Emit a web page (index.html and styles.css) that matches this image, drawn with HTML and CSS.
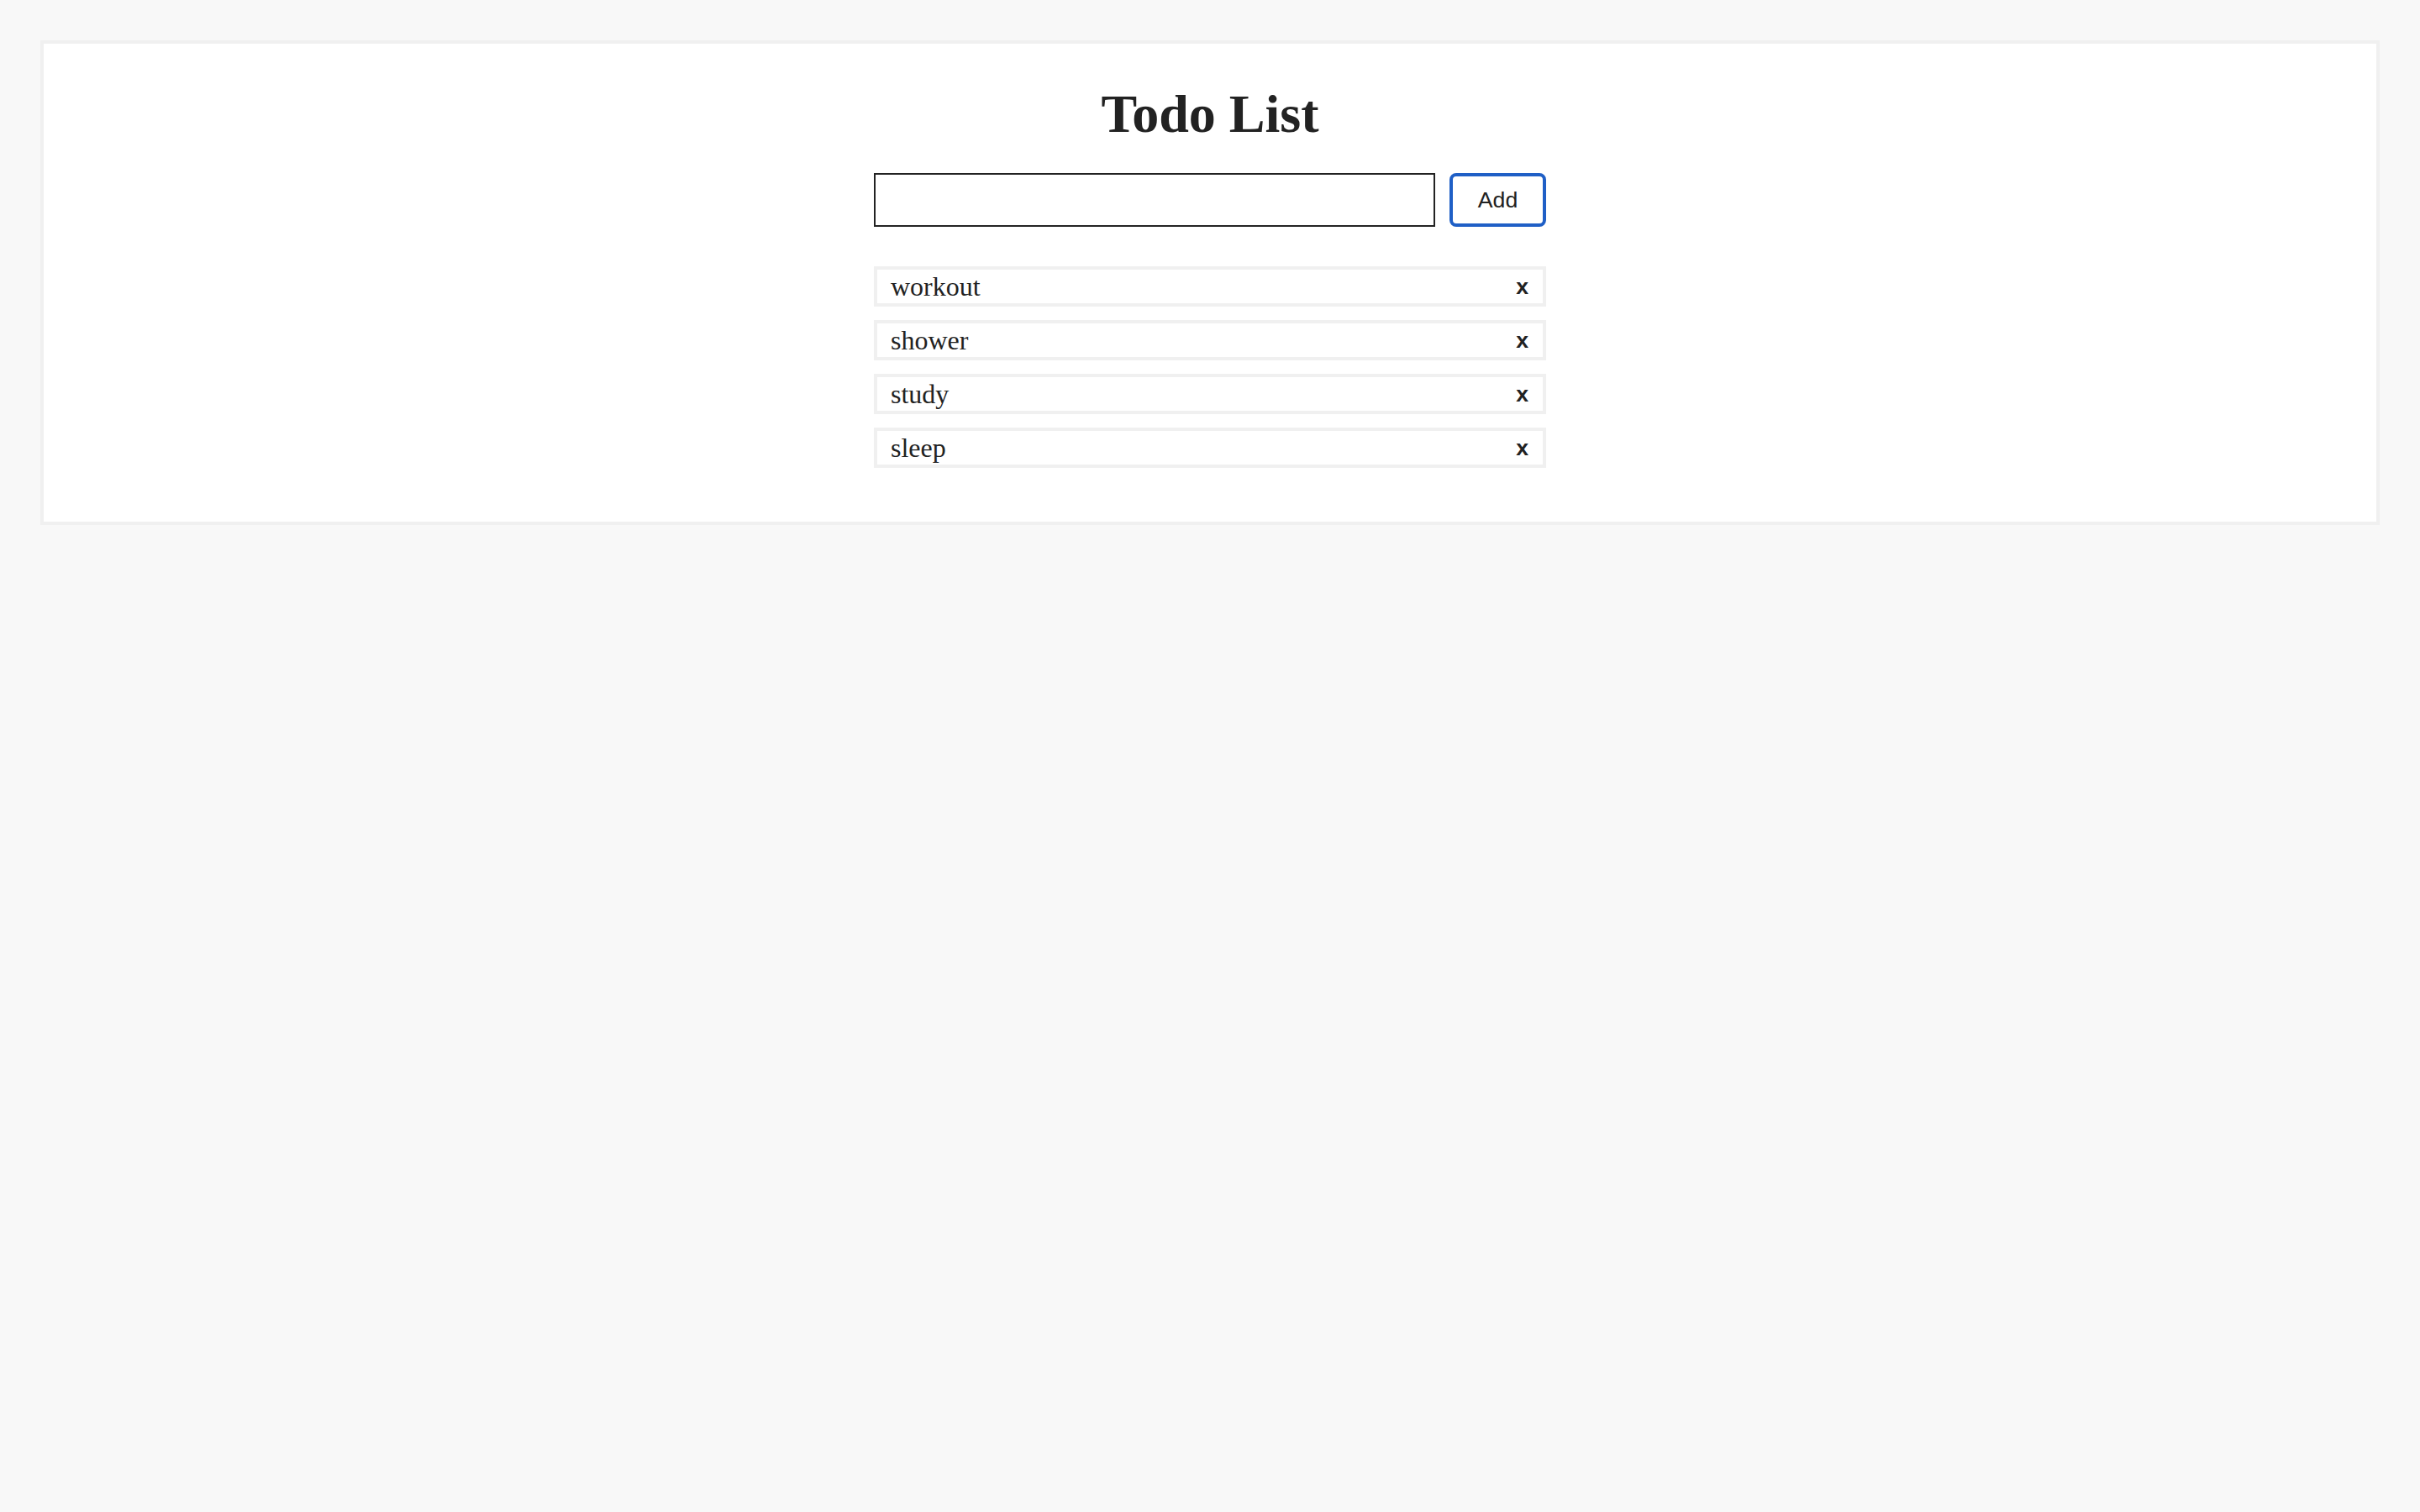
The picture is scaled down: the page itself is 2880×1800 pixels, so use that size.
FILE: index.html
```html
<!DOCTYPE html>
<html lang="en">
<head>
<meta charset="utf-8">
<title>Todo List</title>
<link rel="stylesheet" href="styles.css">
</head>
<body>
<main class="card">
  <h1 class="title">Todo List</h1>
  <form class="add-row" onsubmit="return false">
    <input class="add-input" type="text" aria-label="New todo">
    <button class="add-btn" type="button">Add</button>
  </form>
  <ul class="todo-list">
    <li class="todo-item"><span class="todo-text">workout</span><button class="remove-btn" type="button">x</button></li>
    <li class="todo-item"><span class="todo-text">shower</span><button class="remove-btn" type="button">x</button></li>
    <li class="todo-item"><span class="todo-text">study</span><button class="remove-btn" type="button">x</button></li>
    <li class="todo-item"><span class="todo-text">sleep</span><button class="remove-btn" type="button">x</button></li>
  </ul>
</main>
</body>
</html>
```

FILE: styles.css
```css
html, body {
  margin: 0;
  padding: 0;
}
body {
  background: #f8f8f8;
  padding: 48px 48px 0 48px;
  font-family: "Liberation Serif", "Times New Roman", serif;
  color: #222;
}
.card {
  background: #ffffff;
  border: 4px solid #f0f0f0;
  padding: 48px 0 64px 0;
  display: flex;
  flex-direction: column;
  align-items: center;
}
.title {
  margin: 0;
  font-family: "Liberation Serif", "Times New Roman", serif;
  font-size: 64px;
  line-height: 72px;
  font-weight: bold;
  color: #222;
}
.add-row {
  margin: 34px 0 0 0;
  width: 800px;
  display: flex;
  gap: 17px;
}
.add-input {
  width: 668px;
  height: 64px;
  box-sizing: border-box;
  border: 2px solid #222;
  border-radius: 0;
  padding: 0 8px;
  font-family: "Liberation Sans", Arial, sans-serif;
  font-size: 26px;
  outline: none;
  background: #fff;
}
.add-btn {
  width: 115px;
  height: 64px;
  box-sizing: border-box;
  border: 4px solid #1f5fc6;
  border-radius: 8px;
  background: #fff;
  color: #222;
  font-family: "Liberation Sans", Arial, sans-serif;
  font-size: 26.67px;
  padding: 0;
}
.todo-list {
  list-style: none;
  margin: 47px 0 0 0;
  padding: 0;
  width: 800px;
  display: flex;
  flex-direction: column;
  gap: 16px;
}
.todo-item {
  height: 48px;
  box-sizing: border-box;
  border: 4px solid #f0f0f0;
  display: flex;
  align-items: center;
  justify-content: space-between;
  padding: 0 17px 0 16px;
}
.todo-text {
  font-family: "Liberation Serif", "Times New Roman", serif;
  font-size: 32px;
  color: #222;
}
.remove-btn {
  border: none;
  background: transparent;
  padding: 0;
  font-family: "Liberation Sans", Arial, sans-serif;
  font-size: 26.67px;
  font-weight: bold;
  color: #222;
  cursor: pointer;
}
```
